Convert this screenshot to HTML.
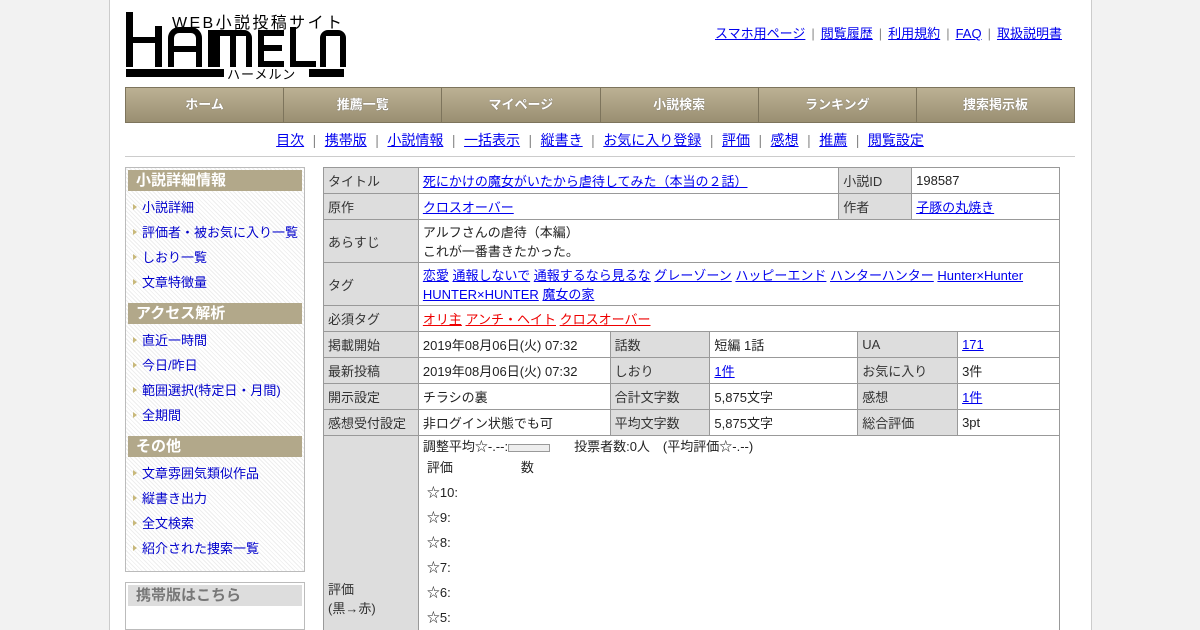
<!DOCTYPE html>
<html style="height:630px;overflow:hidden"><head><meta charset="utf-8"><style>
*{margin:0;padding:0;box-sizing:border-box}
body{width:1200px;height:630px;overflow:hidden;background:#f2f2f2;font-family:"Liberation Sans","Noto Sans CJK JP",sans-serif;font-size:13px;color:#333;position:relative}
#wrap{position:absolute;left:109px;top:0;width:983px;height:630px;background:#fff;border-left:1px solid #ccc;border-right:1px solid #ccc;overflow:hidden}
a{color:#0000ee;text-decoration:underline}
.abs{position:absolute}
#toplinks{right:29px;top:23px;font-size:13px;color:#666;white-space:nowrap}
#toplinks span{margin:0 6px;color:#888}
#nav{left:15px;top:87px;width:950px;height:36px;display:flex;border:1px solid #7d745c}
#nav div{flex:1;text-align:center;line-height:33px;color:#fff;font-weight:bold;font-size:13px;background:linear-gradient(#bcb194,#9a8f72);border-right:1px solid #7d745c;text-shadow:0 0 1px #555}
#nav div:last-child{border-right:none}
#sub{left:15px;top:130px;width:950px;text-align:center;font-size:14px;color:#888}
#sub span{margin:0 8.5px}
#hr{left:15px;top:156px;width:950px;height:1px;background:#ccc}
#side{left:15px;top:167px;width:180px;height:405px;border:1px solid #bbb;background:repeating-linear-gradient(45deg,#fff 0 2px,#eee 2px 3px)}
.sh{margin:2px 2px 4px;height:21px;background:#b2a88a;color:#fff;font-weight:bold;font-size:15px;line-height:21px;padding-left:8px}
.si{height:25px;line-height:25px;padding-left:16px;font-size:13px;position:relative}
.si a{text-decoration:none;color:#0000cc}
.si:before{content:"";position:absolute;left:7px;top:9px;border-left:4px solid #c8b87a;border-top:3px solid transparent;border-bottom:3px solid transparent}
#mob{left:15px;top:582px;width:180px;height:60px;border:1px solid #bbb}
#mob .h{margin:2px;height:21px;background:#ddd;color:#777;font-weight:bold;font-size:15px;line-height:21px;padding-left:8px}
table{border-collapse:collapse;position:absolute;font-size:13px}
td{border:1px solid #999;padding:0 4px;vertical-align:middle;color:#222}
td.l{background:#ddd;color:#333}
.red{color:#e00}
</style></head><body>
<div id="wrap">
<svg class="abs" style="left:14px;top:8px" width="222" height="74" viewBox="0 0 222 74">
<text x="48" y="20" font-family="Liberation Sans,Noto Sans CJK JP,sans-serif" font-size="16" fill="#000" textLength="170" lengthAdjust="spacing">WEB小説投稿サイト</text>
<g fill="#000">
<rect x="2" y="4" width="7" height="55"/><rect x="2" y="29" width="34" height="6"/><rect x="31" y="18" width="7" height="41"/>
<path d="M44 59V30a11 11 0 0 1 11-11h12a11 11 0 0 1 11 11v29h-6V44H50v15zM50 38h22v-8a5 5 0 0 0-5-5H55a5 5 0 0 0-5 5z"/>
<path d="M84 59V22h36a8 8 0 0 1 8 8v29h-6V28h-10v31h-6V28h-10v31z"/>
<path d="M134 59V22h26v6h-20v9h18v6h-18v10h20v6z"/>
<path d="M166 19h6v34h20v6h-26z"/>
<path d="M196 59V30a8 8 0 0 1 8-8h10a8 8 0 0 1 8 8v29h-6V28h-14v31z"/>
<rect x="2" y="61" width="98" height="8"/><rect x="185" y="61" width="35" height="8"/>
</g>
<text x="103" y="71" font-family="Noto Sans CJK JP,sans-serif" font-size="13" fill="#000" letter-spacing="1">ハーメルン</text>
</svg>
<div id="toplinks" class="abs"><a>スマホ用ページ</a><span>|</span><a>閲覧履歴</a><span>|</span><a>利用規約</a><span>|</span><a>FAQ</a><span>|</span><a>取扱説明書</a></div>
<div id="nav" class="abs"><div>ホーム</div><div>推薦一覧</div><div>マイページ</div><div>小説検索</div><div>ランキング</div><div>捜索掲示板</div></div>
<div id="sub" class="abs"><a>目次</a><span>|</span><a>携帯版</a><span>|</span><a>小説情報</a><span>|</span><a>一括表示</a><span>|</span><a>縦書き</a><span>|</span><a>お気に入り登録</a><span>|</span><a>評価</a><span>|</span><a>感想</a><span>|</span><a>推薦</a><span>|</span><a>閲覧設定</a></div>
<div id="hr" class="abs"></div>
<div id="side" class="abs">
<div class="sh">小説詳細情報</div>
<div class="si"><a>小説詳細</a></div><div class="si"><a>評価者・被お気に入り一覧</a></div><div class="si"><a>しおり一覧</a></div><div class="si"><a>文章特徴量</a></div>
<div class="sh" style="margin-top:8px">アクセス解析</div>
<div class="si"><a>直近一時間</a></div><div class="si"><a>今日/昨日</a></div><div class="si"><a>範囲選択(特定日・月間)</a></div><div class="si"><a>全期間</a></div>
<div class="sh" style="margin-top:8px">その他</div>
<div class="si"><a>文章雰囲気類似作品</a></div><div class="si"><a>縦書き出力</a></div><div class="si"><a>全文検索</a></div><div class="si"><a>紹介された捜索一覧</a></div>
</div>
<div id="mob" class="abs" style="height:48px"><div class="h">携帯版はこちら</div></div>

<table style="left:213px;top:167px;width:737px">
<colgroup><col style="width:95px"><col style="width:421px"><col style="width:73px"><col style="width:148px"></colgroup>
<tr style="height:26px"><td class="l">タイトル</td><td><a>死にかけの魔女がいたから虐待してみた（本当の２話）</a></td><td class="l">小説ID</td><td>198587</td></tr>
<tr style="height:26px"><td class="l">原作</td><td><a>クロスオーバー</a></td><td class="l">作者</td><td><a>子豚の丸焼き</a></td></tr>
<tr style="height:43px"><td class="l">あらすじ</td><td colspan="3">アルフさんの虐待（本編）<br>これが一番書きたかった。</td></tr>
<tr style="height:43px"><td class="l">タグ</td><td colspan="3"><a>恋愛</a> <a>通報しないで</a> <a>通報するなら見るな</a> <a>グレーゾーン</a> <a>ハッピーエンド</a> <a>ハンターハンター</a> <a>Hunter×Hunter</a><br><a>HUNTER×HUNTER</a> <a>魔女の家</a></td></tr>
<tr style="height:26px"><td class="l">必須タグ</td><td colspan="3"><a class="red">オリ主</a> <a class="red">アンチ・ヘイト</a> <a class="red">クロスオーバー</a></td></tr>
</table>
<table style="left:213px;top:331px;width:737px">
<colgroup><col style="width:95px"><col style="width:192px"><col style="width:100px"><col style="width:148px"><col style="width:100px"><col style="width:102px"></colgroup>
<tr style="height:26px"><td class="l">掲載開始</td><td>2019年08月06日(火) 07:32</td><td class="l">話数</td><td>短編 1話</td><td class="l">UA</td><td><a>171</a></td></tr>
<tr style="height:26px"><td class="l">最新投稿</td><td>2019年08月06日(火) 07:32</td><td class="l">しおり</td><td><a>1件</a></td><td class="l">お気に入り</td><td>3件</td></tr>
<tr style="height:26px"><td class="l">開示設定</td><td>チラシの裏</td><td class="l">合計文字数</td><td>5,875文字</td><td class="l">感想</td><td><a>1件</a></td></tr>
<tr style="height:26px"><td class="l">感想受付設定</td><td>非ログイン状態でも可</td><td class="l">平均文字数</td><td>5,875文字</td><td class="l">総合評価</td><td>3pt</td></tr>
<tr style="height:196px"><td class="l" style="vertical-align:top;padding-top:143px">評価<br>(黒→赤)</td><td colspan="5" style="vertical-align:top;padding-top:2px;line-height:18px;overflow:hidden"><div style="height:192px;overflow:hidden">調整平均☆-.--:<span style="display:inline-block;width:42px;height:8px;border:1px solid #999;background:#eee;vertical-align:middle"></span><span style="margin-left:24px">投票者数:0人　(平均評価☆-.--)</span>
<div style="padding-left:4px;margin-top:-1px;line-height:25px"><div>評価<span style="margin-left:68px">数</span></div><div>☆10:</div><div>☆9:</div><div>☆8:</div><div>☆7:</div><div>☆6:</div><div>☆5:</div></div></div></td></tr>
</table>
</div>
</body></html>
